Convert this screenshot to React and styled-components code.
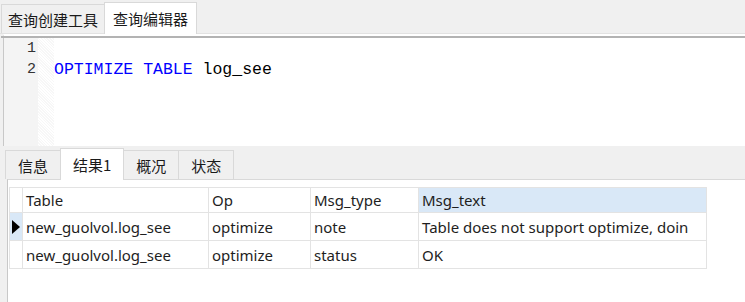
import React from "react";
import styled, { createGlobalStyle } from "styled-components";

const Global = createGlobalStyle`
  html, body { margin: 0; padding: 0; background: #f0f0f0; }
  body { width: 745px; height: 302px; overflow: hidden; font-family: "Noto Sans", "Noto Sans CJK SC", sans-serif; }
`;

const Page = styled.div`
  width: 745px;
  height: 302px;
  display: flex;
  flex-direction: column;
  background: #f0f0f0;
`;

const TopTabs = styled.div`
  height: 34px;
  display: flex;
  align-items: flex-end;
  padding-left: 1px;
  box-sizing: border-box;
  border-bottom: 1px solid #e2e2e2;
`;

const Tab = styled.div`
  box-sizing: border-box;
  height: ${(p) => (p.$active ? 32 : 29)}px;
  margin-bottom: ${(p) => (p.$active ? -1 : 0)}px;
  padding: 0 ${(p) => p.$pad}px;
  display: flex;
  align-items: center;
  font-family: "Noto Sans CJK SC", sans-serif;
  font-size: 15px;
  color: #1a1a1a;
  background: ${(p) => (p.$active ? "#ffffff" : "#f0f0f0")};
  border: 1px solid #d9d9d9;
  border-bottom: none;
  margin-right: -1px;
  position: relative;
  z-index: ${(p) => (p.$active ? 1 : 0)};
`;

const Editor = styled.div`
  height: 112px;
  background: #fff;
  border-top: 3px solid #fff;
  display: flex;
  box-sizing: border-box;
  margin-left: 3px;
  position: relative;
  border-left: 1px solid #c8c8c8;
  &::before {
    content: "";
    position: absolute;
    left: -3px;
    right: 0;
    top: -1px;
    height: 2px;
    background: #b3b3b3;
  }
`;

const Gutter = styled.div`
  width: 34px;
  background: #f4f4f4;
  padding-top: 1px;
  box-sizing: border-box;
`;

const Hatch = styled.div`
  width: 16px;
  background: repeating-linear-gradient(45deg, #f7f7f7 0 1px, #ffffff 1px 2px);
`;

const LineNo = styled.div`
  height: 21px;
  line-height: 21px;
  text-align: right;
  padding-right: 2px;
  font-family: "Liberation Mono", monospace;
  font-size: 15px;
  color: #333;
`;

const Code = styled.div`
  padding-top: 1px;
  padding-left: 0;
`;

const CodeLine = styled.div`
  height: 21px;
  line-height: 21px;
  font-family: "Liberation Mono", monospace;
  font-size: 16.5px;
  color: #000;
  white-space: pre;
`;

const Kw = styled.span`
  color: #0000ff;
`;

const Divider = styled.div`
  height: 5px;
  background: #f0f0f0;
`;

const BottomTabs = styled.div`
  height: 28px;
  display: flex;
  align-items: flex-end;
  padding-left: 5px;
  box-sizing: border-box;
`;

const ResultPanel = styled.div`
  flex: 1;
  background: #fff;
  margin-left: 7px;
  border-left: 1px solid #c8c8c8;
  border-top: 1px solid #d9d9d9;
  padding: 7px 0 0 1px;
  box-sizing: border-box;
`;

const Grid = styled.div`
  display: grid;
  grid-template-columns: 14px 186px 102px 108px 288px;
  width: max-content;
`;

const Cell = styled.div`
  box-sizing: border-box;
  height: ${(p) => (p.$head ? 26 : 28)}px;
  padding-left: 3px;
  display: flex;
  align-items: center;
  font-family: "Noto Sans", "Noto Sans CJK SC", sans-serif;
  font-size: 15px;
  color: #1e1e1e;
  white-space: nowrap;
  overflow: hidden;
  background: ${(p) => (p.$hl ? "#d9e8f7" : "#fff")};
  border-right: 1px solid #e3e3e3;
  border-bottom: 1px solid #e3e3e3;
  border-left: ${(p) => (p.$first ? "1px solid #e3e3e3" : "none")};
  border-top: ${(p) => (p.$head ? "1px solid #e3e3e3" : "none")};
`;

const Indicator = styled(Cell)`
  padding-left: 2px;
`;

const Arrow = styled.svg`
  display: block;
`;

const columns = ["Table", "Op", "Msg_type", "Msg_text"];
const rows = [
  ["new_guolvol.log_see", "optimize", "note", "Table does not support optimize, doin"],
  ["new_guolvol.log_see", "optimize", "status", "OK"],
];

export default function App() {
  return (
    <Page>
      <Global />
      <TopTabs>
        <Tab $pad={6}>查询创建工具</Tab>
        <Tab $active $pad={8}>查询编辑器</Tab>
      </TopTabs>
      <Editor>
        <Gutter>
          <LineNo>1</LineNo>
          <LineNo>2</LineNo>
        </Gutter>
        <Hatch />
        <Code>
          <CodeLine> </CodeLine>
          <CodeLine>
            <Kw>OPTIMIZE</Kw> <Kw>TABLE</Kw> log_see
          </CodeLine>
        </Code>
      </Editor>
      <Divider />
      <BottomTabs>
        <Tab $pad={12}>信息</Tab>
        <Tab $active $pad={12}>结果1</Tab>
        <Tab $pad={12}>概况</Tab>
        <Tab $pad={12}>状态</Tab>
      </BottomTabs>
      <ResultPanel>
        <Grid>
          <Indicator $head $first />
          {columns.map((c, i) => (
            <Cell key={c} $head $hl={i === 3}>
              {c}
            </Cell>
          ))}
          {rows.map((r, ri) => (
            <React.Fragment key={ri}>
              <Indicator $first $hl={ri === 0}>
                {ri === 0 && (
                  <Arrow width="8" height="14" viewBox="0 0 8 14">
                    <path d="M0 0 L8 7 L0 14 Z" fill="#000" />
                  </Arrow>
                )}
              </Indicator>
              {r.map((v, ci) => (
                <Cell key={ci}>{v}</Cell>
              ))}
            </React.Fragment>
          ))}
        </Grid>
      </ResultPanel>
    </Page>
  );
}
